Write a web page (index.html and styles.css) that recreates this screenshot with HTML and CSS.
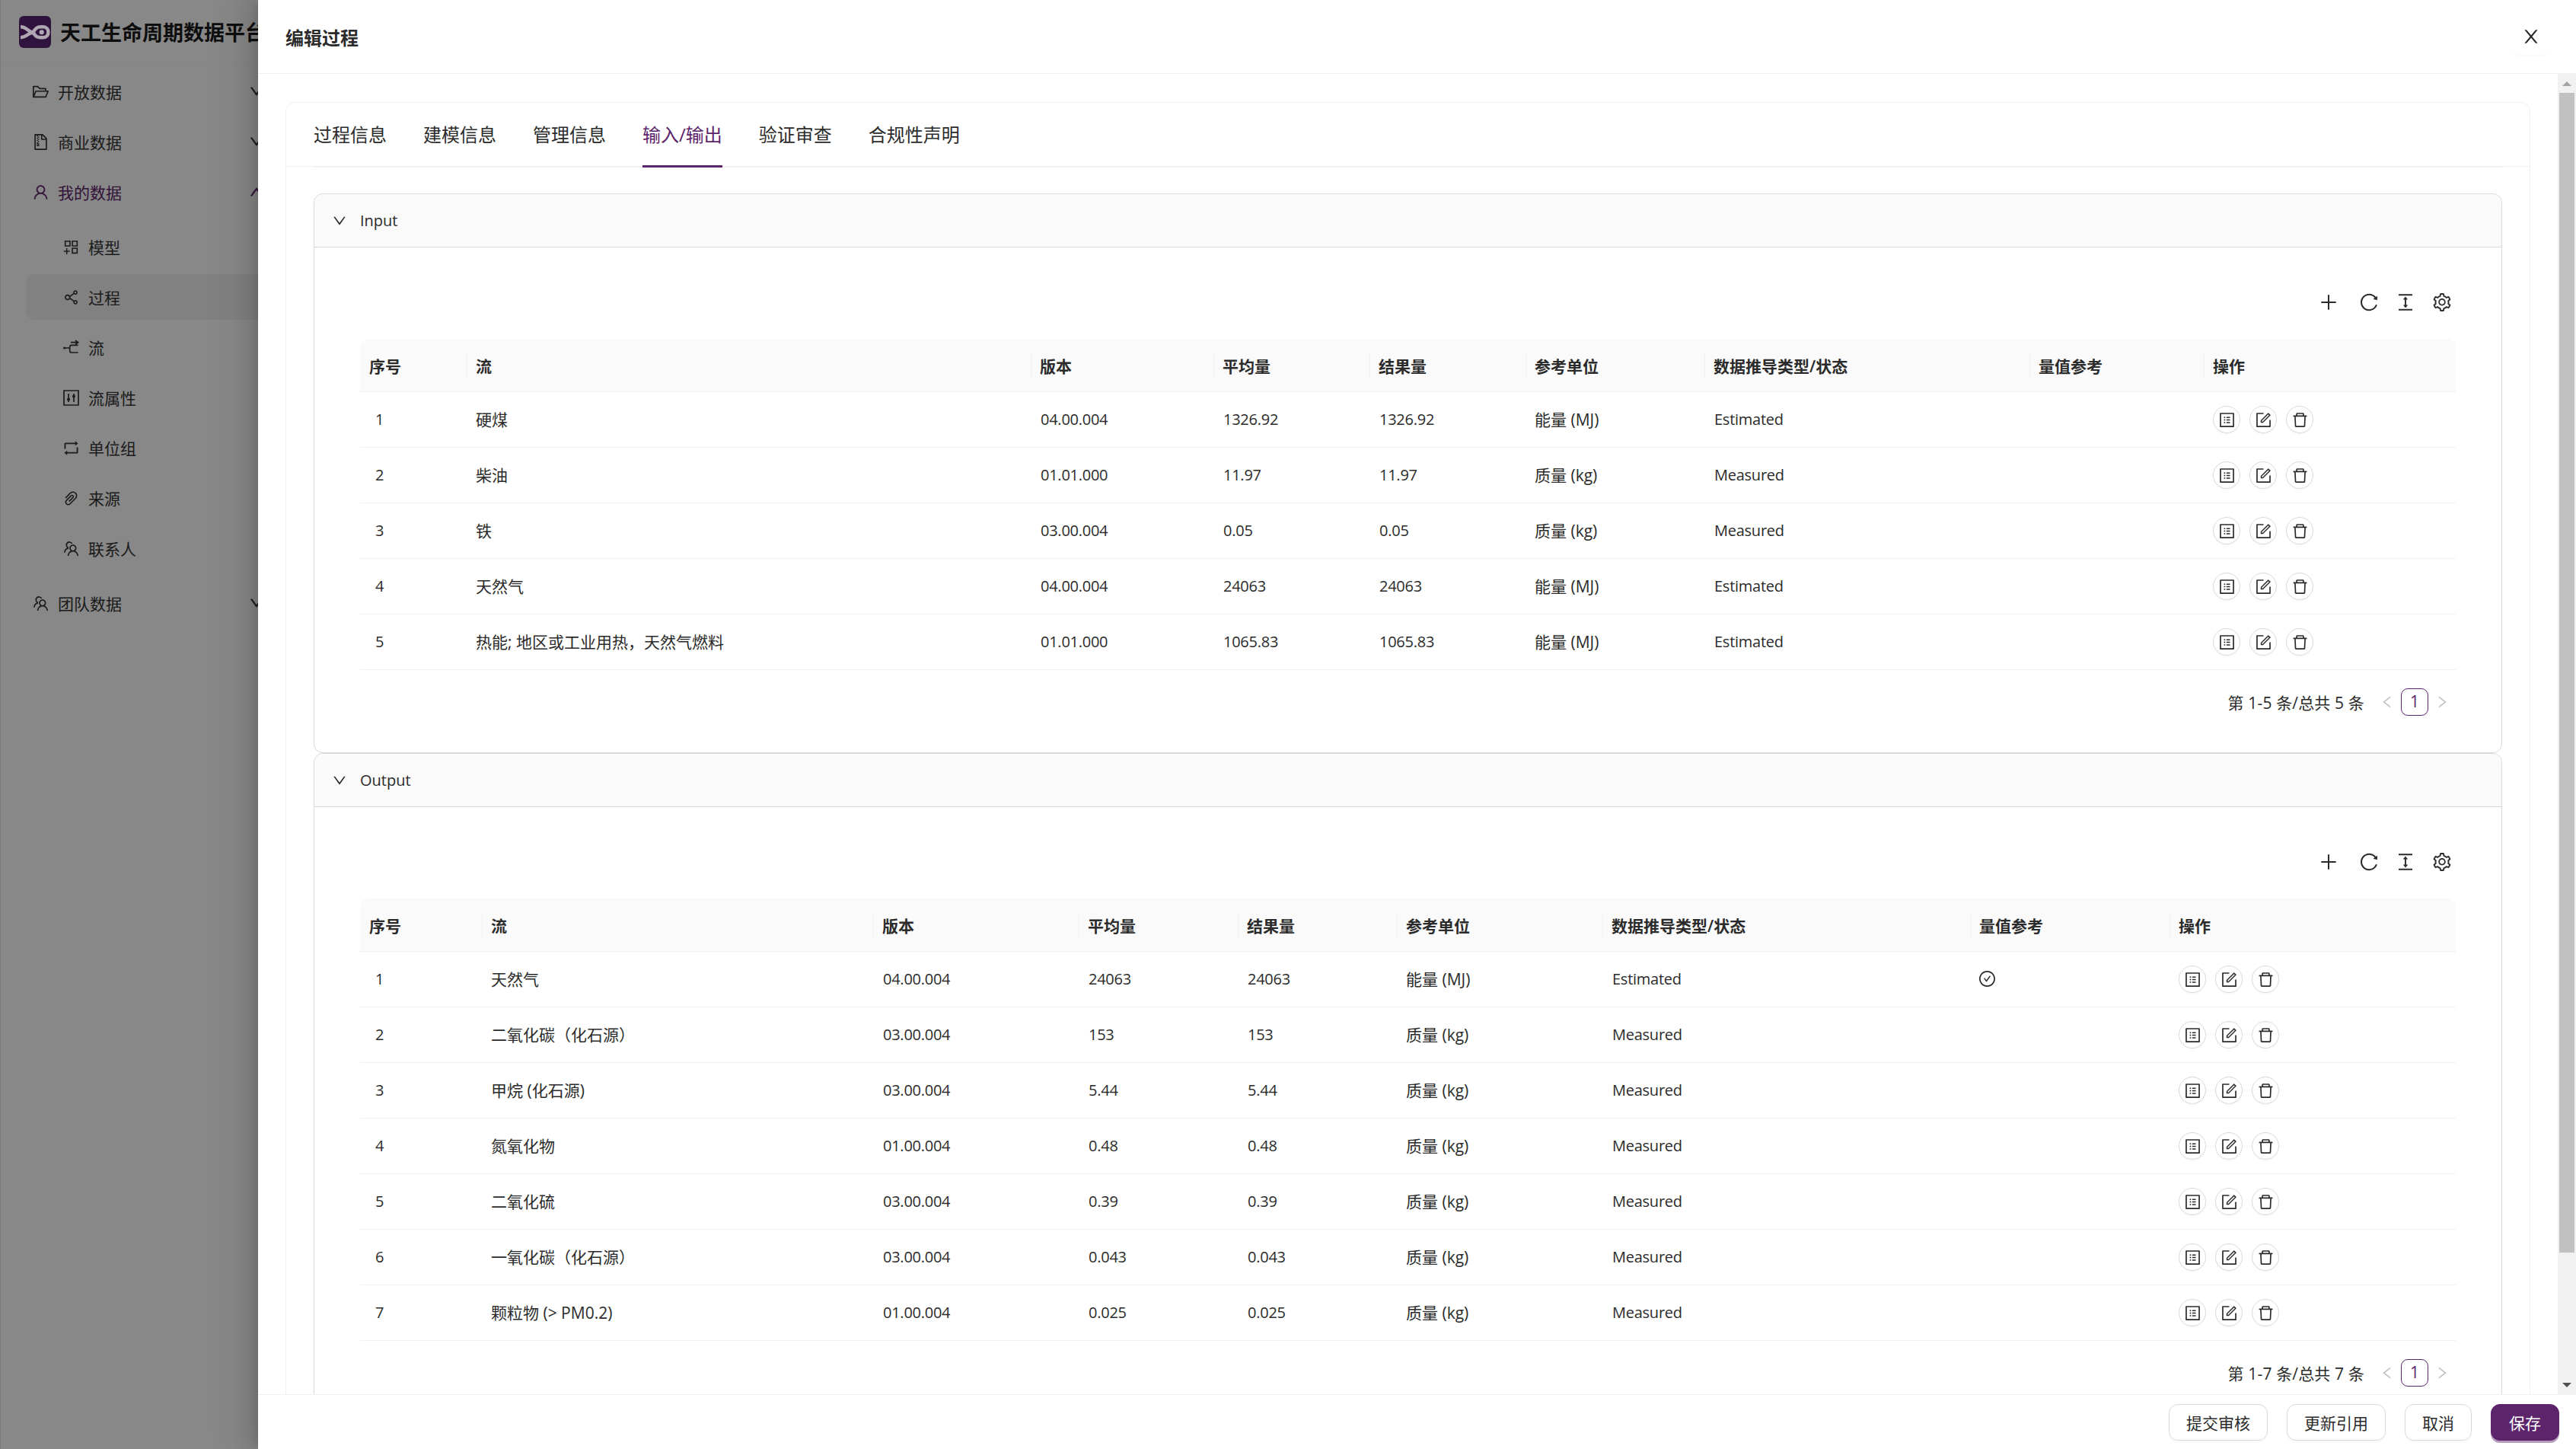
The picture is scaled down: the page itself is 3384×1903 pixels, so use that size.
FILE: index.html
```html
<!DOCTYPE html>
<html lang="zh-CN">
<head>
    <meta charset="UTF-8">
    <meta name="viewport" content="width=device-width, initial-scale=1.0">
    <title>编辑过程</title>
    <link rel="stylesheet" href="styles.css">
</head>
<body>
    <svg class="sprite" xmlns="http://www.w3.org/2000/svg">
        <symbol id="i-folder" viewBox="64 64 896 896"><path d="M928 444H820V330.4c0-17.7-14.3-32-32-32H473L355.7 186.2a8.15 8.15 0 00-5.5-2.2H96c-17.7 0-32 14.3-32 32v592c0 17.7 14.3 32 32 32h698c13 0 24.8-7.9 29.7-20l134-332c1.5-3.8 2.3-7.9 2.3-12 0-17.7-14.3-32-32-32zM136 256h188.5l119.6 114.4H748V444H238c-13 0-24.8 7.9-29.7 20L136 643.2V256zm635.3 512H159l103.3-256h612.4L771.3 768z"/></symbol>
        <symbol id="i-zip" viewBox="64 64 896 896"><path d="M296 392h64v64h-64zm0 190v160h128V582h-64v-62h-64v62zm80 48v64h-32v-64h32zm-16-302h64v64h-64zm-64-64h64v64h-64zm64 192h64v64h-64zm0-256h64v64h-64zm494.6 88.6L639.4 73.4c-6-6-14.1-9.4-22.6-9.4H192c-17.7 0-32 14.3-32 32v832c0 17.7 14.3 32 32 32h640c17.7 0 32-14.3 32-32V311.3c0-8.5-3.4-16.7-9.4-22.7zM790.2 326H602V137.8L790.2 326zm1.8 562H232V136h64v64h64v-64h174v216a42 42 0 0042 42h216v494z"/></symbol>
        <symbol id="i-user" viewBox="64 64 896 896"><path d="M858.5 763.6a374 374 0 00-80.6-119.5 375.63 375.63 0 00-119.5-80.6c-.4-.2-.8-.3-1.2-.5C719.5 518 760 444.7 760 362c0-137-111-248-248-248S264 225 264 362c0 82.7 40.5 156 102.8 201.1-.4.2-.8.3-1.2.5-44.8 18.9-85 46-119.5 80.6a375.63 375.63 0 00-80.6 119.5A371.7 371.7 0 00136 901.8a8 8 0 008 8.2h60c4.4 0 7.9-3.5 8-7.8 2-77.2 33-149.5 87.8-204.3 56.7-56.7 132-87.9 212.2-87.9s155.5 31.2 212.2 87.9C779 752.7 810 825 812 902.2c.1 4.4 3.6 7.8 8 7.8h60a8 8 0 008-8.2c-1-47.8-10.9-94.3-29.5-138.2zM512 534c-45.9 0-89.1-17.9-121.6-50.4S340 407.9 340 362c0-45.9 17.9-89.1 50.4-121.6S466.1 190 512 190s89.1 17.9 121.6 50.4S684 316.1 684 362c0 45.9-17.9 89.1-50.4 121.6S557.9 534 512 534z"/></symbol>
        <symbol id="i-product" viewBox="64 64 896 896"><path d="M464 144H160c-8.8 0-16 7.2-16 16v304c0 8.8 7.2 16 16 16h304c8.8 0 16-7.2 16-16V160c0-8.8-7.2-16-16-16zm-52 268H212V212h200v200zm452-268H560c-8.8 0-16 7.2-16 16v304c0 8.8 7.2 16 16 16h304c8.8 0 16-7.2 16-16V160c0-8.8-7.2-16-16-16zm-52 268H612V212h200v200zm52 132H560c-8.8 0-16 7.2-16 16v304c0 8.8 7.2 16 16 16h304c8.8 0 16-7.2 16-16V560c0-8.8-7.2-16-16-16zm-52 268H612V612h200v200zM424 712H296V584c0-4.4-3.6-8-8-8h-48c-4.4 0-8 3.6-8 8v128H104c-4.4 0-8 3.6-8 8v48c0 4.4 3.6 8 8 8h128v128c0 4.4 3.6 8 8 8h48c4.4 0 8-3.6 8-8V776h128c4.4 0 8-3.6 8-8v-48c0-4.4-3.6-8-8-8z"/></symbol>
        <symbol id="i-share" viewBox="64 64 896 896"><path d="M752 664c-28.5 0-54.8 10-75.4 26.7L469.4 540.8a160.68 160.68 0 000-57.6l207.2-149.9C697.2 350 723.5 360 752 360c66.2 0 120-53.8 120-120s-53.8-120-120-120-120 53.8-120 120c0 11.6 1.6 22.7 4.7 33.3L439.9 415.8C410.7 377.1 364.3 352 312 352c-88.4 0-160 71.6-160 160s71.6 160 160 160c52.3 0 98.7-25.1 127.9-63.8l196.8 142.5c-3.1 10.6-4.7 21.8-4.7 33.3 0 66.2 53.8 120 120 120s120-53.8 120-120-53.8-120-120-120zm0-476c28.7 0 52 23.3 52 52s-23.3 52-52 52-52-23.3-52-52 23.3-52 52-52zM312 600c-48.5 0-88-39.5-88-88s39.5-88 88-88 88 39.5 88 88-39.5 88-88 88zm440 236c-28.7 0-52-23.3-52-52s23.3-52 52-52 52 23.3 52 52-23.3 52-52 52z"/></symbol>
        <symbol id="i-node" viewBox="0 0 21 21"><circle cx="1.6" cy="11" r="1.6"/><path d="M2 11H8.7M19.5 7.3H11Q8.7 7.3 8.7 9.6V14.7Q8.7 17 11 17H19.5M10 3.7H19M16 1L19.6 3.7L16 6.4" fill="none" stroke="currentColor" stroke-width="1.7"/></symbol>
        <symbol id="i-control" viewBox="0 0 21 21"><path d="M1 1H20V20H1ZM7 5V16M14 5V16" fill="none" stroke="currentColor" stroke-width="1.7"/><circle cx="7" cy="12.5" r="2"/><circle cx="14" cy="8.5" r="2"/></symbol>
        <symbol id="i-retweet" viewBox="64 64 896 896"><path d="M136 552h63.6c4.4 0 8-3.6 8-8V288.7h528.6v72.6c0 1.9.6 3.7 1.8 5.2a8.3 8.3 0 0011.7 1.4L893 255.4c4.3-5 3.6-10.3 0-13.2L749.7 129.8a8.22 8.22 0 00-5.2-1.8c-4.6 0-8.4 3.8-8.4 8.4V209H199.7c-39.5 0-71.7 32.2-71.7 71.8V544c0 4.4 3.6 8 8 8zm752-80h-63.6c-4.4 0-8 3.6-8 8v255.3H287.8v-72.6c0-1.9-.6-3.7-1.8-5.2a8.3 8.3 0 00-11.7-1.4L131 768.6c-4.3 5-3.6 10.3 0 13.2l143.3 112.4c1.5 1.2 3.3 1.8 5.2 1.8 4.6 0 8.4-3.8 8.4-8.4V815h536.6c39.5 0 71.7-32.2 71.7-71.8V480c-.1-4.4-3.7-8-8.1-8z"/></symbol>
        <symbol id="i-clip" viewBox="64 64 896 896"><path d="M779.3 196.6c-94.2-94.2-247.6-94.2-341.7 0l-261 260.8c-1.7 1.7-2.6 4-2.6 6.4s.9 4.7 2.6 6.4l36.9 36.9a9 9 0 0012.7 0l261-260.8c32.4-32.4 75.5-50.2 121.3-50.2s88.9 17.8 121.2 50.2c32.4 32.4 50.2 75.5 50.2 121.2 0 45.8-17.8 88.8-50.2 121.2l-266 265.9-43.1 43.1c-40.3 40.3-105.8 40.3-146.1 0-19.5-19.5-30.2-45.4-30.2-73s10.7-53.5 30.2-73l263.9-263.8c6.7-6.6 15.5-10.3 24.9-10.3h.1c9.4 0 18.1 3.7 24.7 10.3 6.7 6.7 10.3 15.5 10.3 24.9 0 9.3-3.7 18.1-10.3 24.7L372.4 653c-1.7 1.7-2.6 4-2.6 6.4s.9 4.7 2.6 6.4l36.9 36.9a9 9 0 0012.7 0l215.6-215.6c19.9-19.9 30.8-46.3 30.8-74.4s-11-54.6-30.8-74.4c-41.1-41.1-107.9-41-149 0L463 364 224.8 602.1A172.22 172.22 0 00174 724.8c0 46.3 18.1 89.8 50.8 122.5 33.9 33.8 78.3 50.7 122.7 50.7 44.4 0 88.8-16.9 122.6-50.7l309.2-309C824.8 492.7 850 432 850 367.5c.1-64.6-25.1-125.3-70.7-170.9z"/></symbol>
        <symbol id="i-team" viewBox="64 64 896 896"><path d="M824.2 699.9a301.55 301.55 0 00-86.4-60.4C783.1 602.8 812 546.8 812 484c0-110.8-92.4-201.7-203.2-200-109.1 1.7-197 90.6-197 200 0 62.8 29 118.8 74.2 155.5a300.95 300.95 0 00-86.4 60.4C345 754.6 314 826.8 312 903.8a8 8 0 008 8.2h56c4.3 0 7.9-3.4 8-7.7 1.9-58 25.4-112.3 66.7-153.5A226.62 226.62 0 01612 684c60.9 0 118.2 23.7 161.3 66.8C814.5 792 838 846.3 840 904.3c.1 4.3 3.7 7.7 8 7.7h56a8 8 0 008-8.2c-2-77-33-149.2-87.8-203.9zM612 612c-34.2 0-66.4-13.3-90.5-37.5a126.86 126.86 0 01-37.5-91.8c.3-32.8 13.4-64.5 36.3-88 24-24.6 56.1-38.3 90.4-38.7 33.9-.3 66.8 12.9 91 36.6 24.8 24.3 38.4 56.8 38.4 91.4 0 34.2-13.3 66.3-37.5 90.5A127.3 127.3 0 01612 612zM361.5 510.4c-.9-8.7-1.4-17.5-1.4-26.4 0-15.9 1.5-31.4 4.3-46.5.7-3.6-1.2-7.3-4.5-8.8-13.6-6.1-26.1-14.5-36.9-25.1a127.54 127.54 0 01-38.7-95.4c.9-32.1 13.8-62.6 36.3-85.6 24.7-25.3 57.9-39.1 93.2-38.7 31.9.3 62.7 12.6 86 34.4 7.9 7.4 14.7 15.6 20.4 24.4 2 3.1 5.9 4.4 9.3 3.2 17.6-6.1 36.2-10.4 55.3-12.4 5.6-.6 8.8-6.6 6.3-11.6-32.5-64.3-98.9-108.7-175.7-109.9-110.9-1.7-203.3 89.2-203.3 199.9 0 62.8 28.9 118.8 74.2 155.5-31.8 14.7-61.1 35-86.5 60.4-54.8 54.7-85.8 126.9-87.8 204a8 8 0 008 8.2h56.1c4.3 0 7.9-3.4 8-7.7 1.9-58 25.4-112.3 66.7-153.5 29.4-29.4 65.4-49.8 104.7-59.7 3.9-1 6.5-4.7 6-8.7z"/></symbol>
        <symbol id="i-down" viewBox="64 64 896 896"><path d="M884 256h-75c-5.1 0-9.9 2.5-12.9 6.6L512 654.2 227.9 262.6c-3-4.1-7.8-6.6-12.9-6.6h-75c-6.5 0-10.3 7.4-6.5 12.7l352.6 486.1c12.8 17.6 39 17.6 51.7 0l352.6-486.1c3.9-5.3.1-12.7-6.4-12.7z"/></symbol>
        <symbol id="i-left" viewBox="64 64 896 896"><path d="M724 218.3V141c0-6.7-7.7-10.4-12.9-6.3L260.3 486.8a31.86 31.86 0 000 50.3l450.8 352.1c5.3 4.1 12.9.4 12.9-6.3v-77.3c0-4.9-2.3-9.6-6.1-12.6l-360-281 360-281.1c3.8-3 6.1-7.7 6.1-12.6z"/></symbol>
        <symbol id="i-right" viewBox="64 64 896 896"><path d="M765.7 486.8L314.9 134.7A7.97 7.97 0 00302 141v77.3c0 4.9 2.3 9.6 6.1 12.6l360 281.1-360 281.1c-3.8 3-6.1 7.7-6.1 12.6V883c0 6.7 7.7 10.4 12.9 6.3l450.8-352.1a31.96 31.96 0 000-50.4z"/></symbol>
        <symbol id="i-close" viewBox="64 64 896 896"><path d="M563.8 512l262.5-312.9c4.4-5.2.7-13.1-6.1-13.1h-79.8c-4.7 0-9.2 2.1-12.3 5.7L511.6 449.8 295.1 191.7c-3-3.6-7.5-5.7-12.3-5.7H203c-6.8 0-10.5 7.9-6.1 13.1L459.4 512 196.9 824.9A7.95 7.95 0 00203 838h79.8c4.7 0 9.2-2.1 12.3-5.7l216.5-258.1 216.5 258.1c3 3.6 7.5 5.7 12.3 5.7h79.8c6.8 0 10.5-7.9 6.1-13.1L563.8 512z"/></symbol>
        <symbol id="i-plus" viewBox="64 64 896 896"><path d="M482 152h60q8 0 8 8v704q0 8-8 8h-60q-8 0-8-8V160q0-8 8-8z"/><path d="M192 474h672q8 0 8 8v60q0 8-8 8H160q-8 0-8-8v-60q0-8 8-8z"/></symbol>
        <symbol id="i-reload" viewBox="64 64 896 896"><path d="M909.1 209.3l-56.4 44.1C775.8 155.1 656.2 92 521.9 92 290 92 102.3 279.5 102 511.5 101.7 743.7 289.8 932 521.9 932c181.3 0 335.8-115 394.6-276.1 1.5-4.2-.7-8.9-4.9-10.3l-56.7-19.5a8 8 0 00-10.1 4.8c-1.8 5-3.8 10-5.9 14.9-17.3 41-42.1 77.8-73.7 109.4A344.77 344.77 0 01655.9 829c-42.3 17.9-87.4 27-133.8 27-46.5 0-91.5-9.1-133.8-27A341.5 341.5 0 01279 755.2a342.16 342.16 0 01-73.7-109.4c-17.9-42.4-27-87.4-27-133.9s9.1-91.5 27-133.9c17.3-41 42.1-77.8 73.7-109.4 31.6-31.6 68.4-56.4 109.3-73.8 42.3-17.9 87.4-27 133.8-27 46.5 0 91.5 9.1 133.8 27a341.5 341.5 0 01109.3 73.8c9.9 9.9 19.2 20.4 27.8 31.4l-60.2 47a8 8 0 003 14.1l175.6 43c5 1.2 9.9-2.6 9.9-7.7l.8-180.9c-.1-6.6-7.8-10.3-13-6.2z"/></symbol>
        <symbol id="i-height" viewBox="64 64 896 896"><path d="M840 836H184c-4.4 0-8 3.6-8 8v60c0 4.4 3.6 8 8 8h656c4.4 0 8-3.6 8-8v-60c0-4.4-3.6-8-8-8zm0-724H184c-4.4 0-8 3.6-8 8v60c0 4.4 3.6 8 8 8h656c4.4 0 8-3.6 8-8v-60c0-4.4-3.6-8-8-8zM610.8 378c6 0 9.4-7 5.7-11.7L515.7 238.7a7.14 7.14 0 00-11.3 0L403.6 366.3a7.23 7.23 0 005.7 11.7H476v268h-62.8c-6 0-9.4 7-5.7 11.7l100.8 127.5c2.9 3.7 8.5 3.7 11.3 0l100.8-127.5c3.7-4.7.4-11.7-5.7-11.7H548V378h62.8z"/></symbol>
        <symbol id="i-setting" viewBox="64 64 896 896"><path d="M924.8 625.7l-65.5-56c3.1-19 4.7-38.4 4.7-57.8s-1.6-38.8-4.7-57.8l65.5-56a32.03 32.03 0 009.3-35.2l-.9-2.6a443.74 443.74 0 00-79.7-137.9l-1.8-2.1a32.12 32.12 0 00-35.1-9.5l-81.3 28.9c-30-24.6-63.5-44-99.7-57.6l-15.7-85a32.05 32.05 0 00-25.8-25.7l-2.7-.5c-52.1-9.4-106.9-9.4-159 0l-2.7.5a32.05 32.05 0 00-25.8 25.7l-15.8 85.4a351.86 351.86 0 00-99 57.4l-81.9-29.1a32 32 0 00-35.1 9.5l-1.8 2.1a446.02 446.02 0 00-79.7 137.9l-.9 2.6c-4.5 12.5-.8 26.5 9.3 35.2l66.3 56.6c-3.1 18.8-4.6 38-4.6 57.1 0 19.2 1.5 38.4 4.6 57.1L99 625.5a32.03 32.03 0 00-9.3 35.2l.9 2.6c18.1 50.4 44.9 96.9 79.7 137.9l1.8 2.1a32.12 32.12 0 0035.1 9.5l81.9-29.1c29.8 24.5 63.1 43.9 99 57.4l15.8 85.4a32.05 32.05 0 0025.8 25.7l2.7.5a449.4 449.4 0 00159 0l2.7-.5a32.05 32.05 0 0025.8-25.7l15.7-85a350 350 0 0099.7-57.6l81.3 28.9a32 32 0 0035.1-9.5l1.8-2.1c34.8-41.1 61.6-87.5 79.7-137.9l.9-2.6c4.5-12.3.8-26.3-9.3-35zM788.3 465.9c2.5 15.1 3.8 30.6 3.8 46.1s-1.3 31-3.8 46.1l-6.6 40.1 74.7 63.9a370.03 370.03 0 01-42.6 73.6L721 702.8l-31.4 25.8c-23.9 19.6-50.5 35-79.3 45.8l-38.1 14.3-17.9 97a377.5 377.5 0 01-85 0l-17.9-97.2-37.8-14.5c-28.5-10.8-55-26.2-78.7-45.7l-31.4-25.9-93.4 33.2c-17-22.9-31.2-47.6-42.6-73.6l75.5-64.5-6.5-40c-2.4-14.9-3.7-30.3-3.7-45.5 0-15.3 1.2-30.6 3.7-45.5l6.5-40-75.5-64.5c11.3-26.1 25.6-50.7 42.6-73.6l93.4 33.2 31.4-25.9c23.7-19.5 50.2-34.9 78.7-45.7l37.9-14.3 17.9-97.2c28.1-3.2 56.8-3.2 85 0l17.9 97 38.1 14.3c28.7 10.8 55.4 26.2 79.3 45.8l31.4 25.8 92.8-32.9c17 22.9 31.2 47.6 42.6 73.6L781.8 426l6.5 39.9zM512 326c-97.2 0-176 78.8-176 176s78.8 176 176 176 176-78.8 176-176-78.8-176-176-176zm79.2 255.2A111.6 111.6 0 01512 614c-29.9 0-58-11.7-79.2-32.8A111.6 111.6 0 01400 502c0-29.9 11.7-58 32.8-79.2C454 401.6 482.1 390 512 390c29.9 0 58 11.6 79.2 32.8A111.6 111.6 0 01624 502c0 29.9-11.7 58-32.8 79.2z"/></symbol>
        <symbol id="i-profile" viewBox="64 64 896 896"><path d="M880 112H144c-17.7 0-32 14.3-32 32v736c0 17.7 14.3 32 32 32h736c17.7 0 32-14.3 32-32V144c0-17.7-14.3-32-32-32zm-40 728H184V184h656v656zM492 400h184c4.4 0 8-3.6 8-8v-48c0-4.4-3.6-8-8-8H492c-4.4 0-8 3.6-8 8v48c0 4.4 3.6 8 8 8zm0 144h184c4.4 0 8-3.6 8-8v-48c0-4.4-3.6-8-8-8H492c-4.4 0-8 3.6-8 8v48c0 4.4 3.6 8 8 8zm0 144h184c4.4 0 8-3.6 8-8v-48c0-4.4-3.6-8-8-8H492c-4.4 0-8 3.6-8 8v48c0 4.4 3.6 8 8 8zM340 368a40 40 0 1080 0 40 40 0 10-80 0zm0 144a40 40 0 1080 0 40 40 0 10-80 0zm0 144a40 40 0 1080 0 40 40 0 10-80 0z"/></symbol>
        <symbol id="i-form" viewBox="64 64 896 896"><path d="M904 512h-56c-4.4 0-8 3.6-8 8v320H184V184h320c4.4 0 8-3.6 8-8v-56c0-4.4-3.6-8-8-8H144c-17.7 0-32 14.3-32 32v736c0 17.7 14.3 32 32 32h736c17.7 0 32-14.3 32-32V520c0-4.4-3.6-8-8-8z"/><path d="M355.9 534.9L354 653.8c-.1 8.9 7.1 16.2 16 16.2h.4l118-2.9c2-.1 4-.9 5.4-2.3l415.9-415c3.1-3.1 3.1-8.2 0-11.3L785.4 114.3c-1.6-1.6-3.6-2.3-5.7-2.3s-4.1.8-5.7 2.3l-415.8 415a8.3 8.3 0 00-2.3 5.6zm63.5 23.6L779.7 199l45.2 45.1-360.5 359.7-45.7 1.1.7-46.4z"/></symbol>
        <symbol id="i-delete" viewBox="64 64 896 896"><path d="M360 184h-8c4.4 0 8-3.6 8-8v8h304v-8c0 4.4 3.6 8 8 8h-8v72h72v-80c0-35.3-28.7-64-64-64H352c-35.3 0-64 28.7-64 64v80h72v-72zm504 72H160c-17.7 0-32 14.3-32 32v32c0 4.4 3.6 8 8 8h60.4l24.7 523c1.6 34.1 29.8 61 63.9 61h454c34.2 0 62.3-26.8 63.9-61l24.7-523H888c4.4 0 8-3.6 8-8v-32c0-17.7-14.3-32-32-32zM731.3 840H292.7l-24.2-512h487l-24.2 512z"/></symbol>
        <symbol id="i-check" viewBox="64 64 896 896"><path d="M699 353h-46.9c-10.2 0-19.9 4.9-25.9 13.3L469 584.3l-71.2-98.8c-6-8.3-15.6-13.3-25.9-13.3H325c-6.5 0-10.3 7.4-6.5 12.7l124.6 172.8a31.8 31.8 0 0051.7 0l210.6-292c3.9-5.3.1-12.7-6.4-12.7z"/><path d="M512 64C264.6 64 64 264.6 64 512s200.6 448 448 448 448-200.6 448-448S759.4 64 512 64zm0 820c-205.4 0-372-166.6-372-372s166.6-372 372-372 372 166.6 372 372-166.6 372-372 372z"/></symbol>
    </svg>

    <aside class="sidebar">
        <div class="brand">
            <svg class="logo" viewBox="0 0 41 41"><rect width="41" height="41" rx="6" fill="#30123f"/><path d="M2 14C10 14 12 21 18 21C12 21 10 27.5 2 27.5M18 21C21 16 23 14 28 14H31C35 14 37.5 17 37.5 20.7C37.5 24.5 35 27.5 31 27.5H28C23 27.5 21 26 18 21Z" fill="none" stroke="#aea6b1" stroke-width="4.4"/><circle cx="29" cy="20.7" r="3" fill="#aea6b1"/></svg>
            <span class="brand-name">天工生命周期数据平台</span>
        </div>
        <nav class="menu">
            <div class="menu-item"><svg class="icon"><use href="#i-folder"/></svg><span>开放数据</span><svg class="caret"><use href="#i-down"/></svg></div>
            <div class="menu-item"><svg class="icon"><use href="#i-zip"/></svg><span>商业数据</span><svg class="caret"><use href="#i-down"/></svg></div>
            <div class="menu-item open"><svg class="icon"><use href="#i-user"/></svg><span>我的数据</span><svg class="caret up"><use href="#i-down"/></svg></div>
            <div class="submenu">
                <div class="menu-item child"><svg class="icon"><use href="#i-product"/></svg><span>模型</span></div>
                <div class="menu-item child selected"><svg class="icon"><use href="#i-share"/></svg><span>过程</span></div>
                <div class="menu-item child"><svg class="icon"><use href="#i-node"/></svg><span>流</span></div>
                <div class="menu-item child"><svg class="icon"><use href="#i-control"/></svg><span>流属性</span></div>
                <div class="menu-item child"><svg class="icon"><use href="#i-retweet"/></svg><span>单位组</span></div>
                <div class="menu-item child"><svg class="icon"><use href="#i-clip"/></svg><span>来源</span></div>
                <div class="menu-item child"><svg class="icon"><use href="#i-team"/></svg><span>联系人</span></div>
            </div>
            <div class="menu-item"><svg class="icon"><use href="#i-team"/></svg><span>团队数据</span><svg class="caret"><use href="#i-down"/></svg></div>
        </nav>
    </aside>

    <div class="mask"></div>

    <section class="drawer">
        <header class="drawer-head">
            <div class="drawer-title">编辑过程</div>
            <button class="close-btn"><svg class="icon"><use href="#i-close"/></svg></button>
        </header>

        <div class="drawer-main">
            <div class="drawer-body">
                <div class="card">
                    <div class="card-head">
                        <div class="tabs">
                            <div class="tab">过程信息</div>
                            <div class="tab">建模信息</div>
                            <div class="tab">管理信息</div>
                            <div class="tab active">输入/输出</div>
                            <div class="tab">验证审查</div>
                            <div class="tab">合规性声明</div>
                        </div>
                    </div>
                    <div class="card-body">
                        <div class="panel">
                            <div class="panel-head"><svg class="arrow"><use href="#i-down"/></svg>Input</div>
                            <div class="panel-content">
                                <div class="toolbar">
                                    <button class="tool add"><svg class="icon"><use href="#i-plus"/></svg></button>
                                    <button class="tool"><svg class="icon"><use href="#i-reload"/></svg></button>
                                    <button class="tool"><svg class="icon"><use href="#i-height"/></svg></button>
                                    <button class="tool"><svg class="icon"><use href="#i-setting"/></svg></button>
                                </div>
                                <table class="data-table input-table">
                                    <colgroup><col><col><col><col><col><col><col><col><col></colgroup>
                                    <thead>
                                        <tr><th>序号</th><th>流</th><th>版本</th><th>平均量</th><th>结果量</th><th>参考单位</th><th>数据推导类型/状态</th><th>量值参考</th><th>操作</th></tr>
                                    </thead>
                                    <tbody>
                                        <tr><td><span class="idx">1</span></td><td>硬煤</td><td class="num">04.00.004</td><td class="num">1326.92</td><td class="num">1326.92</td><td>能量 (MJ)</td><td class="num">Estimated</td><td></td><td><div class="actions"><button><svg class="icon"><use href="#i-profile"/></svg></button><button><svg class="icon"><use href="#i-form"/></svg></button><button><svg class="icon"><use href="#i-delete"/></svg></button></div></td></tr>
                                        <tr><td><span class="idx">2</span></td><td>柴油</td><td class="num">01.01.000</td><td class="num">11.97</td><td class="num">11.97</td><td>质量 (kg)</td><td class="num">Measured</td><td></td><td><div class="actions"><button><svg class="icon"><use href="#i-profile"/></svg></button><button><svg class="icon"><use href="#i-form"/></svg></button><button><svg class="icon"><use href="#i-delete"/></svg></button></div></td></tr>
                                        <tr><td><span class="idx">3</span></td><td>铁</td><td class="num">03.00.004</td><td class="num">0.05</td><td class="num">0.05</td><td>质量 (kg)</td><td class="num">Measured</td><td></td><td><div class="actions"><button><svg class="icon"><use href="#i-profile"/></svg></button><button><svg class="icon"><use href="#i-form"/></svg></button><button><svg class="icon"><use href="#i-delete"/></svg></button></div></td></tr>
                                        <tr><td><span class="idx">4</span></td><td>天然气</td><td class="num">04.00.004</td><td class="num">24063</td><td class="num">24063</td><td>能量 (MJ)</td><td class="num">Estimated</td><td></td><td><div class="actions"><button><svg class="icon"><use href="#i-profile"/></svg></button><button><svg class="icon"><use href="#i-form"/></svg></button><button><svg class="icon"><use href="#i-delete"/></svg></button></div></td></tr>
                                        <tr><td><span class="idx">5</span></td><td>热能; 地区或工业用热，天然气燃料</td><td class="num">01.01.000</td><td class="num">1065.83</td><td class="num">1065.83</td><td>能量 (MJ)</td><td class="num">Estimated</td><td></td><td><div class="actions"><button><svg class="icon"><use href="#i-profile"/></svg></button><button><svg class="icon"><use href="#i-form"/></svg></button><button><svg class="icon"><use href="#i-delete"/></svg></button></div></td></tr>
                                    </tbody>
                                </table>
                                <div class="pagination">
                                    <span class="page-total">第 1-5 条/总共 5 条</span>
                                    <span class="page-arrow"><svg class="icon"><use href="#i-left"/></svg></span>
                                    <span class="page-num">1</span>
                                    <span class="page-arrow"><svg class="icon"><use href="#i-right"/></svg></span>
                                </div>
                            </div>
                        </div>

                        <div class="panel">
                            <div class="panel-head"><svg class="arrow"><use href="#i-down"/></svg>Output</div>
                            <div class="panel-content">
                                <div class="toolbar">
                                    <button class="tool add"><svg class="icon"><use href="#i-plus"/></svg></button>
                                    <button class="tool"><svg class="icon"><use href="#i-reload"/></svg></button>
                                    <button class="tool"><svg class="icon"><use href="#i-height"/></svg></button>
                                    <button class="tool"><svg class="icon"><use href="#i-setting"/></svg></button>
                                </div>
                                <table class="data-table output-table">
                                    <colgroup><col><col><col><col><col><col><col><col><col></colgroup>
                                    <thead>
                                        <tr><th>序号</th><th>流</th><th>版本</th><th>平均量</th><th>结果量</th><th>参考单位</th><th>数据推导类型/状态</th><th>量值参考</th><th>操作</th></tr>
                                    </thead>
                                    <tbody>
                                        <tr><td><span class="idx">1</span></td><td>天然气</td><td class="num">04.00.004</td><td class="num">24063</td><td class="num">24063</td><td>能量 (MJ)</td><td class="num">Estimated</td><td><svg class="icon ref-check"><use href="#i-check"/></svg></td><td><div class="actions"><button><svg class="icon"><use href="#i-profile"/></svg></button><button><svg class="icon"><use href="#i-form"/></svg></button><button><svg class="icon"><use href="#i-delete"/></svg></button></div></td></tr>
                                        <tr><td><span class="idx">2</span></td><td>二氧化碳（化石源）</td><td class="num">03.00.004</td><td class="num">153</td><td class="num">153</td><td>质量 (kg)</td><td class="num">Measured</td><td></td><td><div class="actions"><button><svg class="icon"><use href="#i-profile"/></svg></button><button><svg class="icon"><use href="#i-form"/></svg></button><button><svg class="icon"><use href="#i-delete"/></svg></button></div></td></tr>
                                        <tr><td><span class="idx">3</span></td><td>甲烷 (化石源)</td><td class="num">03.00.004</td><td class="num">5.44</td><td class="num">5.44</td><td>质量 (kg)</td><td class="num">Measured</td><td></td><td><div class="actions"><button><svg class="icon"><use href="#i-profile"/></svg></button><button><svg class="icon"><use href="#i-form"/></svg></button><button><svg class="icon"><use href="#i-delete"/></svg></button></div></td></tr>
                                        <tr><td><span class="idx">4</span></td><td>氮氧化物</td><td class="num">01.00.004</td><td class="num">0.48</td><td class="num">0.48</td><td>质量 (kg)</td><td class="num">Measured</td><td></td><td><div class="actions"><button><svg class="icon"><use href="#i-profile"/></svg></button><button><svg class="icon"><use href="#i-form"/></svg></button><button><svg class="icon"><use href="#i-delete"/></svg></button></div></td></tr>
                                        <tr><td><span class="idx">5</span></td><td>二氧化硫</td><td class="num">03.00.004</td><td class="num">0.39</td><td class="num">0.39</td><td>质量 (kg)</td><td class="num">Measured</td><td></td><td><div class="actions"><button><svg class="icon"><use href="#i-profile"/></svg></button><button><svg class="icon"><use href="#i-form"/></svg></button><button><svg class="icon"><use href="#i-delete"/></svg></button></div></td></tr>
                                        <tr><td><span class="idx">6</span></td><td>一氧化碳（化石源）</td><td class="num">03.00.004</td><td class="num">0.043</td><td class="num">0.043</td><td>质量 (kg)</td><td class="num">Measured</td><td></td><td><div class="actions"><button><svg class="icon"><use href="#i-profile"/></svg></button><button><svg class="icon"><use href="#i-form"/></svg></button><button><svg class="icon"><use href="#i-delete"/></svg></button></div></td></tr>
                                        <tr><td><span class="idx">7</span></td><td>颗粒物 (&gt; PM0.2)</td><td class="num">01.00.004</td><td class="num">0.025</td><td class="num">0.025</td><td>质量 (kg)</td><td class="num">Measured</td><td></td><td><div class="actions"><button><svg class="icon"><use href="#i-profile"/></svg></button><button><svg class="icon"><use href="#i-form"/></svg></button><button><svg class="icon"><use href="#i-delete"/></svg></button></div></td></tr>
                                    </tbody>
                                </table>
                                <div class="pagination">
                                    <span class="page-total">第 1-7 条/总共 7 条</span>
                                    <span class="page-arrow"><svg class="icon"><use href="#i-left"/></svg></span>
                                    <span class="page-num">1</span>
                                    <span class="page-arrow"><svg class="icon"><use href="#i-right"/></svg></span>
                                </div>
                            </div>
                        </div>
                    </div>
                </div>
            </div>

            <div class="scrollbar">
                <div class="scroll-btn"><span class="tri-up"></span></div>
                <div class="scroll-thumb"></div>
                <div class="scroll-rest"></div>
                <div class="scroll-btn"><span class="tri-down"></span></div>
            </div>
        </div>

        <footer class="drawer-foot">
            <button class="btn">提交审核</button>
            <button class="btn">更新引用</button>
            <button class="btn">取消</button>
            <button class="btn primary">保存</button>
        </footer>
    </section>
</body>
</html>
```

FILE: styles.css
```css
* {
    box-sizing: border-box;
}
html, body {
    height: 100%;
}
body {
    margin: 0;
    overflow: hidden;
    background-color: #f8f8f8;
    color: #2b2b2b;
    font-family: "Open Sans", "Noto Sans CJK SC", sans-serif;
    font-size: 21px;
}
button {
    font: inherit;
    color: inherit;
    cursor: pointer;
}
.sprite {
    display: none;
}
.icon {
    display: block;
    width: 21px;
    height: 21px;
    fill: currentColor;
    flex: none;
}

/* sidebar, sits under the mask */
.sidebar {
    width: 360px;
    height: 100%;
    border-left: 1px solid #e0e0e0;
    background-color: #f8f8f8;
}
.brand {
    display: flex;
    align-items: center;
    height: 84px;
    padding-left: 24px;
    border-bottom: 1px solid #f0f0f0;
    white-space: nowrap;
    overflow: hidden;
}
.logo {
    position: relative;
    z-index: 2;
    width: 42px;
    height: 42px;
    margin-right: 12px;
    flex: none;
}
.brand-name {
    font-size: 27px;
    font-weight: 600;
    color: #1a1a1a;
}
.menu {
    padding: 6px 6px 0 33px;
    color: #333;
}
.menu-item {
    display: flex;
    align-items: center;
    height: 60px;
    margin-bottom: 6px;
    padding: 0 8px 0 9px;
    border-radius: 12px;
}
.menu-item .icon {
    margin-right: 12px;
}
.menu-item.open {
    color: #5c246a;
}
.menu-item.child {
    padding-left: 49px;
}
.menu-item.selected {
    background-color: rgba(0, 0, 0, 0.05);
}
.submenu {
    padding: 6px 0;
}
.caret {
    width: 18px;
    height: 18px;
    margin-left: auto;
    fill: currentColor;
    stroke: currentColor;
    stroke-width: 30;
}
.caret.up {
    transform: rotate(180deg);
}
.mask {
    position: absolute;
    inset: 0;
    z-index: 1;
    background-color: rgba(0, 0, 0, 0.45);
}

/* drawer */
.drawer {
    position: absolute;
    top: 0;
    right: 0;
    bottom: 0;
    left: 339px;
    z-index: 3;
    display: flex;
    flex-direction: column;
    background-color: #fff;
    box-shadow: -9px 0 24px 0 rgba(0, 0, 0, 0.12), -4px 0 9px -6px rgba(0, 0, 0, 0.18), -14px 0 42px 12px rgba(0, 0, 0, 0.07);
}
.drawer-head {
    display: flex;
    align-items: center;
    justify-content: space-between;
    height: 97px;
    padding: 0 35px 0 36px;
    border-bottom: 1px solid #f0f0f0;
    flex: none;
}
.drawer-title {
    font-size: 24px;
    font-weight: 600;
}
.close-btn {
    display: flex;
    align-items: center;
    justify-content: center;
    width: 48px;
    height: 48px;
    padding: 0;
    border: none;
    border-radius: 12px;
    background-color: #fff;
    box-shadow: 0 2px 0 rgba(0, 0, 0, 0.02);
}
.close-btn .icon {
    width: 24px;
    height: 24px;
}
.drawer-main {
    display: flex;
    flex: 1;
    min-height: 0;
}
.drawer-body {
    flex: 1;
    min-width: 0;
    padding: 37px 36px 0;
    overflow: hidden;
}
.scrollbar {
    display: flex;
    flex-direction: column;
    width: 24px;
    background-color: #f1f1f1;
    flex: none;
}
.scroll-btn {
    display: flex;
    align-items: center;
    justify-content: center;
    height: 25px;
    flex: none;
}
.tri-up {
    border: 6px solid transparent;
    border-top: none;
    border-bottom: 6px solid #a3a3a3;
    border-left-width: 6px;
    border-right-width: 6px;
}
.tri-down {
    border: 6px solid transparent;
    border-bottom: none;
    border-top: 6px solid #505050;
}
.scroll-thumb {
    height: 1523px;
    margin: 0 2px;
    background-color: #c1c1c1;
    flex: none;
}
.scroll-rest {
    flex: 1;
}
.drawer-foot {
    display: flex;
    justify-content: flex-end;
    gap: 25px;
    height: 72px;
    padding: 12px 22px 0 0;
    border-top: 1px solid #f0f0f0;
    flex: none;
}
.btn {
    height: 48px;
    padding: 0 22px;
    border: 1px solid #d9d9d9;
    border-radius: 12px;
    background-color: #fff;
    box-shadow: 0 3px 0 rgba(0, 0, 0, 0.02);
}
.btn.primary {
    padding: 0 23px;
    border-color: #5c246a;
    background-color: #5c246a;
    color: #fff;
    box-shadow: 0 3px 0 rgba(92, 36, 106, 0.45);
}

/* card + tabs */
.card {
    border: 1px solid #f0f0f0;
    border-radius: 12px;
    background-color: #fff;
}
.card-head {
    height: 84px;
    padding: 0 36px;
    border-bottom: 1px solid #f0f0f0;
}
.tabs {
    display: flex;
    gap: 48px;
    height: 85px;
    border-bottom: 2px solid #f0f0f0;
}
.tab {
    display: flex;
    align-items: center;
    height: 85px;
    padding-bottom: 4px;
    font-size: 24px;
}
.tab.active {
    border-bottom: 3px solid #5c246a;
    padding-bottom: 1px;
    color: #5c246a;
}
.card-body {
    padding: 35px 36px 36px;
}

/* collapse panels */
.panel {
    border: 1px solid #d9d9d9;
    border-radius: 12px;
}
.panel-head {
    display: flex;
    align-items: center;
    height: 70px;
    padding-left: 24px;
    border-bottom: 1px solid #d9d9d9;
    border-radius: 12px 12px 0 0;
    background-color: #fafafa;
    font-size: 20px;
}
.arrow {
    width: 18px;
    height: 18px;
    margin-right: 18px;
    fill: currentColor;
}
.panel-content {
    padding: 24px 60px 48px;
}
.toolbar {
    display: flex;
    align-items: center;
    justify-content: flex-end;
    gap: 12px;
    height: 96px;
}
.tool {
    display: flex;
    align-items: center;
    justify-content: center;
    width: 36px;
    height: 36px;
    padding: 0;
    border: none;
    background: none;
}
.tool .icon {
    width: 24px;
    height: 24px;
}
.tool.add {
    margin-right: 5px;
}

/* tables */
.data-table {
    width: 100%;
    table-layout: fixed;
    border-collapse: separate;
    border-spacing: 0;
}
.data-table th {
    position: relative;
    height: 70px;
    padding: 0 12px;
    border-bottom: 1px solid #f0f0f0;
    background-color: #fafafa;
    font-weight: 600;
    text-align: left;
}
.data-table th::before {
    content: "";
    position: absolute;
    top: 18px;
    left: 0;
    width: 1px;
    height: 34px;
    background-color: #f0f0f0;
}
.data-table th:first-child::before {
    display: none;
}
.data-table th:first-child {
    border-top-left-radius: 12px;
}
.data-table th:last-child {
    border-top-right-radius: 12px;
}
.data-table td {
    height: 73px;
    padding: 0 12px 2px;
    border-bottom: 1px solid #f0f0f0;
}
.data-table .num {
    padding-left: 13px;
    font-size: 20px;
    letter-spacing: -0.25px;
}
.idx {
    margin-left: 8px;
    font-size: 20px;
}
.input-table col:nth-child(1) { width: 140px; }
.input-table col:nth-child(2) { width: 741px; }
.input-table col:nth-child(3) { width: 240px; }
.input-table col:nth-child(4) { width: 205px; }
.input-table col:nth-child(5) { width: 205px; }
.input-table col:nth-child(6) { width: 235px; }
.input-table col:nth-child(7) { width: 427px; }
.input-table col:nth-child(8) { width: 229px; }
.output-table col:nth-child(1) { width: 160px; }
.output-table col:nth-child(2) { width: 514px; }
.output-table col:nth-child(3) { width: 270px; }
.output-table col:nth-child(4) { width: 209px; }
.output-table col:nth-child(5) { width: 209px; }
.output-table col:nth-child(6) { width: 270px; }
.output-table col:nth-child(7) { width: 483px; }
.output-table col:nth-child(8) { width: 262px; }
.actions {
    display: flex;
    gap: 12px;
    margin-bottom: -2px;
}
.actions button {
    display: flex;
    align-items: center;
    justify-content: center;
    width: 36px;
    height: 36px;
    padding: 0;
    border: 1px solid #d9d9d9;
    border-radius: 50%;
    background-color: #fff;
    box-shadow: 0 2px 0 rgba(0, 0, 0, 0.02);
}

/* pagination */
.pagination {
    display: flex;
    align-items: center;
    justify-content: flex-end;
    height: 36px;
    margin-top: 24px;
}
.page-total {
    margin-right: 12px;
    letter-spacing: 0.15px;
}
.page-arrow {
    display: flex;
    align-items: center;
    justify-content: center;
    width: 36px;
    height: 36px;
    color: #bfbfbf;
}
.page-arrow .icon {
    width: 18px;
    height: 18px;
}
.page-num {
    width: 36px;
    height: 36px;
    border: 1px solid #5c246a;
    border-radius: 9px;
    color: #5c246a;
    line-height: 33px;
    text-align: center;
}
```
